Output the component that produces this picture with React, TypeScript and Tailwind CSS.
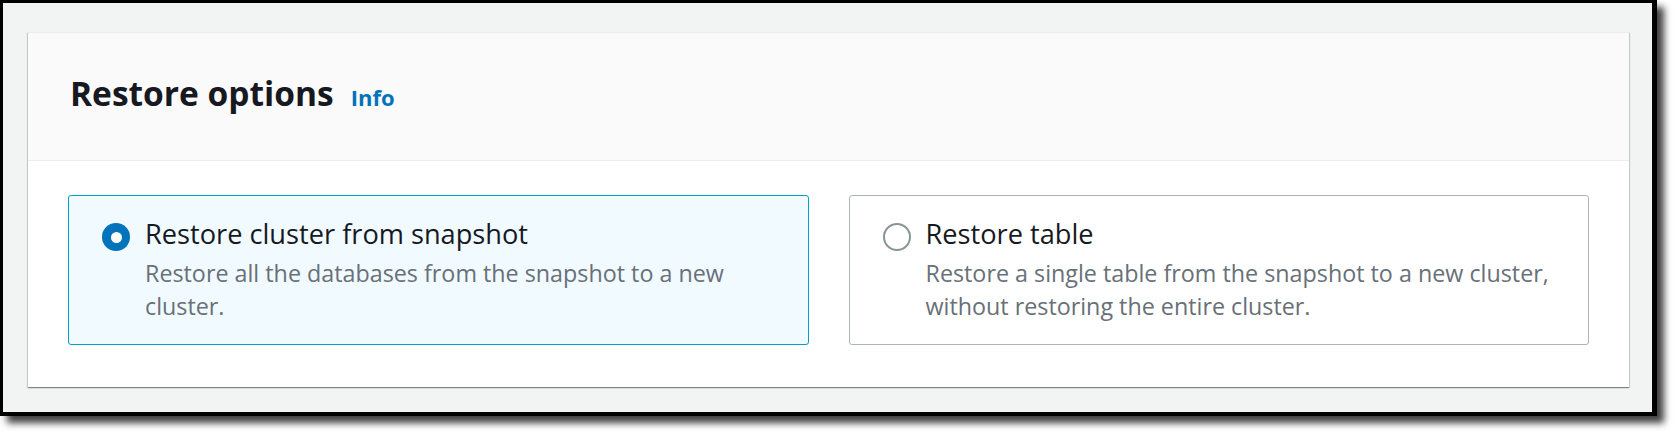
import React from "react";

const font = { fontFamily: '"Open Sans", "Noto Sans", Arial, sans-serif' };

function Tile({
  selected,
  label,
  description,
}: {
  selected: boolean;
  label: string;
  description: string;
}) {
  return (
    <div
      className={
        selected
          ? "h-[150px] rounded-[3px] border border-[#00a1c9] bg-[#f1faff] pl-[33px] pr-[16px] pt-[20px] flex items-start"
          : "h-[150px] rounded-[3px] border border-[#aab7b8] bg-white pl-[33px] pr-[16px] pt-[20px] flex items-start"
      }
    >
      {selected ? (
        <div className="mt-[7px] w-[28px] h-[28px] shrink-0 rounded-full bg-[#0073bb] flex items-center justify-center">
          <div className="w-[11px] h-[11px] rounded-full bg-white" />
        </div>
      ) : (
        <div className="mt-[7px] w-[28px] h-[28px] shrink-0 rounded-full border-[2.5px] border-[#879596] bg-white" />
      )}
      <div className="ml-[15px] flex-1">
        <div className="text-[27.2px] leading-[36px] text-[#16191f]">{label}</div>
        <div className="mt-[5px] text-[23.3px] leading-[32.6px] text-[#687078]">{description}</div>
      </div>
    </div>
  );
}

export default function App() {
  return (
    <div className="w-[1676px] h-[436px] bg-white" style={font}>
      <div className="w-[1657px] h-[416px] border-l-[3px] border-t-[3px] border-r-[5px] border-b-[4px] border-black bg-[#f2f3f3] shadow-[7px_7px_7px_rgba(0,0,0,0.75)] pl-[25px] pr-[23px] pt-[29px]">
        <div className="bg-white border-t border-[#eaeded] shadow-[0_1px_1px_0_rgba(0,28,36,0.3),1px_1px_1px_0_rgba(0,28,36,0.15),-1px_1px_1px_0_rgba(0,28,36,0.15)]">
          <div className="bg-[#fafafa] border-b border-[#eaeded] pl-[42px] pt-[38px] pb-[45px] flex items-baseline">
            <span className="text-[33.5px] leading-[44px] font-bold text-[#16191f]">Restore options</span>
            <span className="ml-[17px] text-[22px] font-bold text-[#0073bb]">Info</span>
          </div>
          <div className="px-[40px] pt-[34px] pb-[42px] grid grid-cols-2 gap-[40px]">
            <Tile
              selected
              label="Restore cluster from snapshot"
              description="Restore all the databases from the snapshot to a new cluster."
            />
            <Tile
              selected={false}
              label="Restore table"
              description="Restore a single table from the snapshot to a new cluster, without restoring the entire cluster."
            />
          </div>
        </div>
      </div>
    </div>
  );
}
